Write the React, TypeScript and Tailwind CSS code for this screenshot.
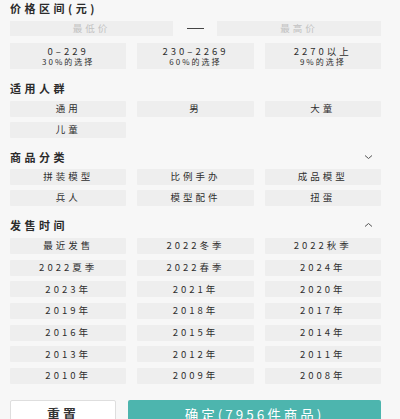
import React from 'react';

const font = { fontFamily: '"Noto Sans CJK SC", "Noto Sans", sans-serif' };

const ranges = [
    { label: '0–229', pct: '30%的选择' },
    { label: '230–2269', pct: '60%的选择' },
    { label: '2270以上', pct: '9%的选择' },
];

const people = ['通用', '男', '大童', '儿童'];
const categories = ['拼装模型', '比例手办', '成品模型', '兵人', '模型配件', '扭蛋'];
const times = [
    '最近发售', '2022冬季', '2022秋季',
    '2022夏季', '2022春季', '2024年',
    '2023年', '2021年', '2020年',
    '2019年', '2018年', '2017年',
    '2016年', '2015年', '2014年',
    '2013年', '2012年', '2011年',
    '2010年', '2009年', '2008年',
];

function Chevron({ up }: { up?: boolean }) {
    return (
        <svg width="9" height="6" viewBox="0 0 9 6" className="mr-[8px]">
            <path
                d={up ? 'M1 4.5 L4.5 1.5 L8 4.5' : 'M1 1.5 L4.5 4.5 L8 1.5'}
                fill="none"
                stroke="#555"
                strokeWidth="1"
            />
        </svg>
    );
}

function Title({ text, chevron }: { text: string; chevron?: 'up' | 'down' }) {
    return (
        <div className="h-[16px] flex items-center justify-between">
            <span className="text-[11px] font-bold tracking-[3.5px] text-[#2b2b2b] leading-none">{text}</span>
            {chevron && <Chevron up={chevron === 'up'} />}
        </div>
    );
}

function Chip({ text }: { text: string }) {
    return (
        <div className="h-[16px] bg-[#eeeeee] rounded-[1px] flex items-center justify-center text-[9.5px] tracking-[3px] text-[#2f2f2f] leading-none">
            {text}
        </div>
    );
}

export default function App() {
    return (
        <div className="w-[400px] h-[419px] bg-[#f7f7f7] flex flex-col overflow-hidden" style={font}>
            <div className="h-[392px] overflow-hidden pl-[10px] pr-[19px] shrink-0">
                <Title text="价格区间(元)" />
                <div className="mt-[5px] flex items-center h-[15px]">
                    <div className="w-[163px] h-full bg-[#eeeeee] flex items-center justify-center text-[9.5px] tracking-[3px] text-[#c2c2c2]">
                        最低价
                    </div>
                    <div className="flex-1 flex justify-center">
                        <div className="w-[17px] h-[1px] bg-[#444]"></div>
                    </div>
                    <div className="w-[164px] h-full bg-[#eeeeee] flex items-center justify-center text-[9.5px] tracking-[3px] text-[#c2c2c2]">
                        最高价
                    </div>
                </div>
                <div className="mt-[7px] grid grid-cols-3 gap-x-[11px]">
                    {ranges.map((r) => (
                        <div key={r.label} className="h-[26px] bg-[#eeeeee] flex flex-col items-center justify-center text-[#2f2f2f]">
                            <span className="text-[9.5px] tracking-[3px] leading-[11px]">{r.label}</span>
                            <span className="text-[8px] tracking-[2px] leading-[10px]">{r.pct}</span>
                        </div>
                    ))}
                </div>

                <div className="mt-[11px]">
                    <Title text="适用人群" />
                </div>
                <div className="mt-[5px] grid grid-cols-3 gap-x-[11px] gap-y-[5px]">
                    {people.map((p) => <Chip key={p} text={p} />)}
                </div>

                <div className="mt-[11px]">
                    <Title text="商品分类" chevron="down" />
                </div>
                <div className="mt-[4px] grid grid-cols-3 gap-x-[11px] gap-y-[5px]">
                    {categories.map((c) => <Chip key={c} text={c} />)}
                </div>

                <div className="mt-[11px]">
                    <Title text="发售时间" chevron="up" />
                </div>
                <div className="mt-[5px] grid grid-cols-3 gap-x-[11px] gap-y-[5.7px]">
                    {times.map((t) => <Chip key={t} text={t} />)}
                </div>
            </div>

            <div className="flex-1 overflow-hidden pt-[8px] pl-[10px] pr-[19px] flex gap-x-[12px] bg-[#f7f7f7]">
                <button className="w-[106px] h-[28px] shrink-0 bg-white border border-[#dedede] rounded-[2px] text-[13px] font-bold tracking-[3px] text-[#333]">
                    重置
                </button>
                <button className="flex-1 h-[28px] bg-[#4db5ae] rounded-[2px] text-[13.5px] tracking-[3px] text-white">
                    确定(7956件商品)
                </button>
            </div>
        </div>
    );
}
